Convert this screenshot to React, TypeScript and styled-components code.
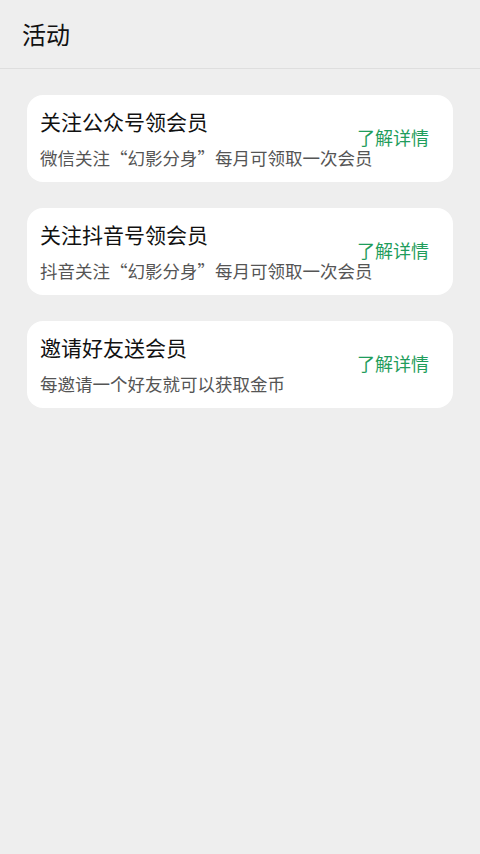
import styled, { createGlobalStyle } from "styled-components";

const activities = [
  {
    title: "关注公众号领会员",
    desc: "微信关注“幻影分身”每月可领取一次会员",
  },
  {
    title: "关注抖音号领会员",
    desc: "抖音关注“幻影分身”每月可领取一次会员",
  },
  {
    title: "邀请好友送会员",
    desc: "每邀请一个好友就可以获取金币",
  },
];

const App = () => {
  return (
    <>
      <GlobalStyle />
      <Page>
        <Header>
          <HeaderTitle>活动</HeaderTitle>
        </Header>

        <List>
          {activities.map((item) => (
            <Card key={item.title}>
              <CardText>
                <CardTitle>{item.title}</CardTitle>
                <CardDesc>{item.desc}</CardDesc>
              </CardText>
              <DetailLink>了解详情</DetailLink>
            </Card>
          ))}
        </List>
      </Page>
    </>
  );
};

const GlobalStyle = createGlobalStyle`
  html, body {
    margin: 0;
    padding: 0;
    background: #eeeeee;
  }

  body {
    font-family: "Noto Sans CJK SC", "Noto Sans", sans-serif;
  }
`;

const Page = styled.div`
  width: 480px;
  min-height: 854px;
  background: #eeeeee;
`;

const Header = styled.div`
  height: 69px;
  padding: 0 22px;
  display: flex;
  align-items: center;
  border-bottom: 1px solid #dedede;
  box-sizing: border-box;
`;

const HeaderTitle = styled.h1`
  margin: 0;
  font-size: 24px;
  font-weight: 400;
  line-height: 1;
  color: #111;
`;

const List = styled.div`
  padding: 26px 27px;
  display: flex;
  flex-direction: column;
  gap: 26px;
`;

const Card = styled.div`
  height: 87px;
  box-sizing: border-box;
  padding: 0 24px 0 13px;
  background: #ffffff;
  border-radius: 16px;

  display: flex;
  align-items: center;
  justify-content: space-between;
`;

// the description runs on under the link, as in the app
const CardText = styled.div`
  flex: 1;
  min-width: 0;
  display: flex;
  flex-direction: column;
  gap: 14px;
`;

const CardTitle = styled.div`
  font-size: 21px;
  line-height: 24px;
  color: #111;
  white-space: nowrap;
`;

const CardDesc = styled.div`
  font-size: 17.5px;
  line-height: 21px;
  color: #555;
  white-space: nowrap;
`;

const DetailLink = styled.div`
  font-size: 18px;
  line-height: 20px;
  color: #1f9d5c;
  white-space: nowrap;
  margin-bottom: 4px;
`;

export default App;
